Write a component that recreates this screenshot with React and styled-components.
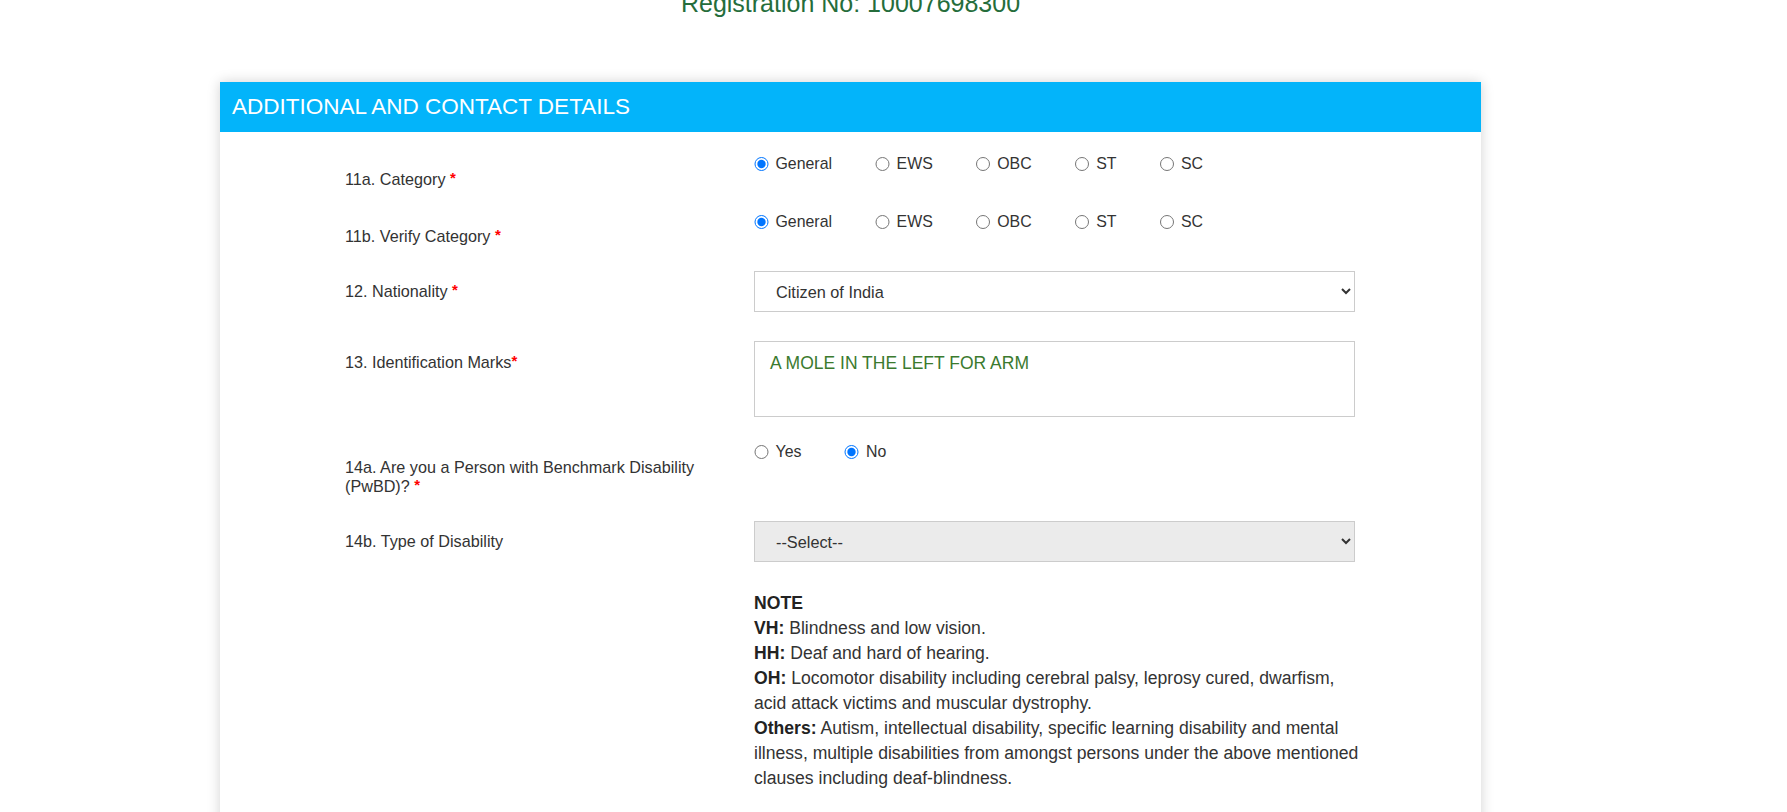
import React from 'react'
import styled, { createGlobalStyle } from 'styled-components'

const GlobalStyle = createGlobalStyle`
  body {
    margin: 0;
    background: #fff;
    font-family: "Liberation Sans", Arial, sans-serif;
    color: #333;
  }
`

const Page = styled.div`
  padding-left: 220px;
  width: 1261px;
`

const RegNo = styled.h3`
  margin: -11px 0 0;
  text-align: center;
  font-size: 25px;
  line-height: 28px;
  font-weight: normal;
  color: #256d3b;
`

const Card = styled.section`
  margin-top: 65px;
  background: #fff;
  box-shadow: 0 0 12px rgba(0, 0, 0, 0.18);
  padding-bottom: 80px;
`

const CardHeader = styled.h2`
  margin: 0;
  height: 50px;
  display: flex;
  align-items: center;
  padding: 0 12px;
  background: #03b4fa;
  color: #fff;
  font-size: 22.5px;
  font-weight: normal;
`

const CardBody = styled.div`
  padding: 20px 0 0 125px;
`

const Row = styled.div`
  display: grid;
  grid-template-columns: 394px 601px;
  column-gap: 15px;
  align-items: start;
  margin-top: ${p => p.$gap || 0}px;
`

const Label = styled.label`
  font-size: 16.2px;
  line-height: 19px;
  color: #333;
  padding-top: ${p => p.$pad}px;
`

const Req = styled.span`
  color: #f00;
  font-size: 15px;
  font-weight: bold;
  line-height: 0;
  vertical-align: 2px;
`

const RadioGroup = styled.div`
  display: flex;
  align-items: center;
  height: 24px;
`

const Option = styled.label`
  display: flex;
  align-items: center;
  gap: 7px;
  margin-right: 43px;
  font-size: 15.9px;
  color: #333;
`

const Radio = styled.input.attrs({ type: 'radio' })`
  width: 14.5px;
  height: 14.5px;
  margin: 0;
`

const Select = styled.select`
  width: 601px;
  height: 41px;
  border: 1px solid #ccc;
  border-radius: 0;
  background: ${p => (p.$muted ? '#ebebeb' : '#fff')};
  font-family: inherit;
  font-size: 16.3px;
  color: #333;
  padding: 0 8px 0 17px;
`

const TextArea = styled.textarea`
  box-sizing: border-box;
  width: 601px;
  height: 76px;
  border: 1px solid #ccc;
  padding: 11px 15px;
  font-family: inherit;
  font-size: 17.5px;
  line-height: 21px;
  color: #3b7a2e;
  resize: none;
`

const Note = styled.div`
  grid-column: 2;
  width: 606px;
  font-size: 17.6px;
  line-height: 25px;
  color: #333;

  b {
    color: #222;
  }
`

const categories = ['General', 'EWS', 'OBC', 'ST', 'SC']

const RadioRow = ({ name, options, checked }) => (
  <RadioGroup>
    {options.map(o => (
      <Option key={o}>
        <Radio name={name} defaultChecked={o === checked} />
        {o}
      </Option>
    ))}
  </RadioGroup>
)

export default function App() {
  return (
    <Page>
      <GlobalStyle />
      <RegNo>Registration No: 10007698300</RegNo>
      <Card>
        <CardHeader>ADDITIONAL AND CONTACT DETAILS</CardHeader>
        <CardBody>
          <Row>
            <Label $pad={18}>11a. Category <Req>*</Req></Label>
            <RadioRow name="cat" options={categories} checked="General" />
          </Row>
          <Row $gap={21}>
            <Label $pad={17}>11b. Verify Category <Req>*</Req></Label>
            <RadioRow name="vcat" options={categories} checked="General" />
          </Row>
          <Row $gap={25}>
            <Label $pad={11}>12. Nationality <Req>*</Req></Label>
            <Select defaultValue="in">
              <option value="in">Citizen of India</option>
            </Select>
          </Row>
          <Row $gap={29}>
            <Label $pad={12}>13. Identification Marks<Req>*</Req></Label>
            <TextArea defaultValue="A MOLE IN THE LEFT FOR ARM" />
          </Row>
          <Row $gap={23}>
            <Label $pad={18}>
              14a. Are you a Person with Benchmark Disability (PwBD)? <Req>*</Req>
            </Label>
            <RadioRow name="pwbd" options={['Yes', 'No']} checked="No" />
          </Row>
          <Row $gap={25}>
            <Label $pad={11}>14b. Type of Disability</Label>
            <Select $muted defaultValue="">
              <option value="">--Select--</option>
              <option value="vh">VH</option>
              <option value="hh">HH</option>
              <option value="oh">OH</option>
              <option value="others">Others</option>
            </Select>
          </Row>
          <Row $gap={29}>
            <Note>
              <b>NOTE</b>
              <br />
              <b>VH:</b> Blindness and low vision.
              <br />
              <b>HH:</b> Deaf and hard of hearing.
              <br />
              <b>OH:</b> Locomotor disability including cerebral palsy, leprosy cured, dwarfism,
              acid attack victims and muscular dystrophy.
              <br />
              <b>Others:</b> Autism, intellectual disability, specific learning disability and
              mental illness, multiple disabilities from amongst persons under the above
              mentioned clauses including deaf-blindness.
            </Note>
          </Row>
        </CardBody>
      </Card>
    </Page>
  )
}
